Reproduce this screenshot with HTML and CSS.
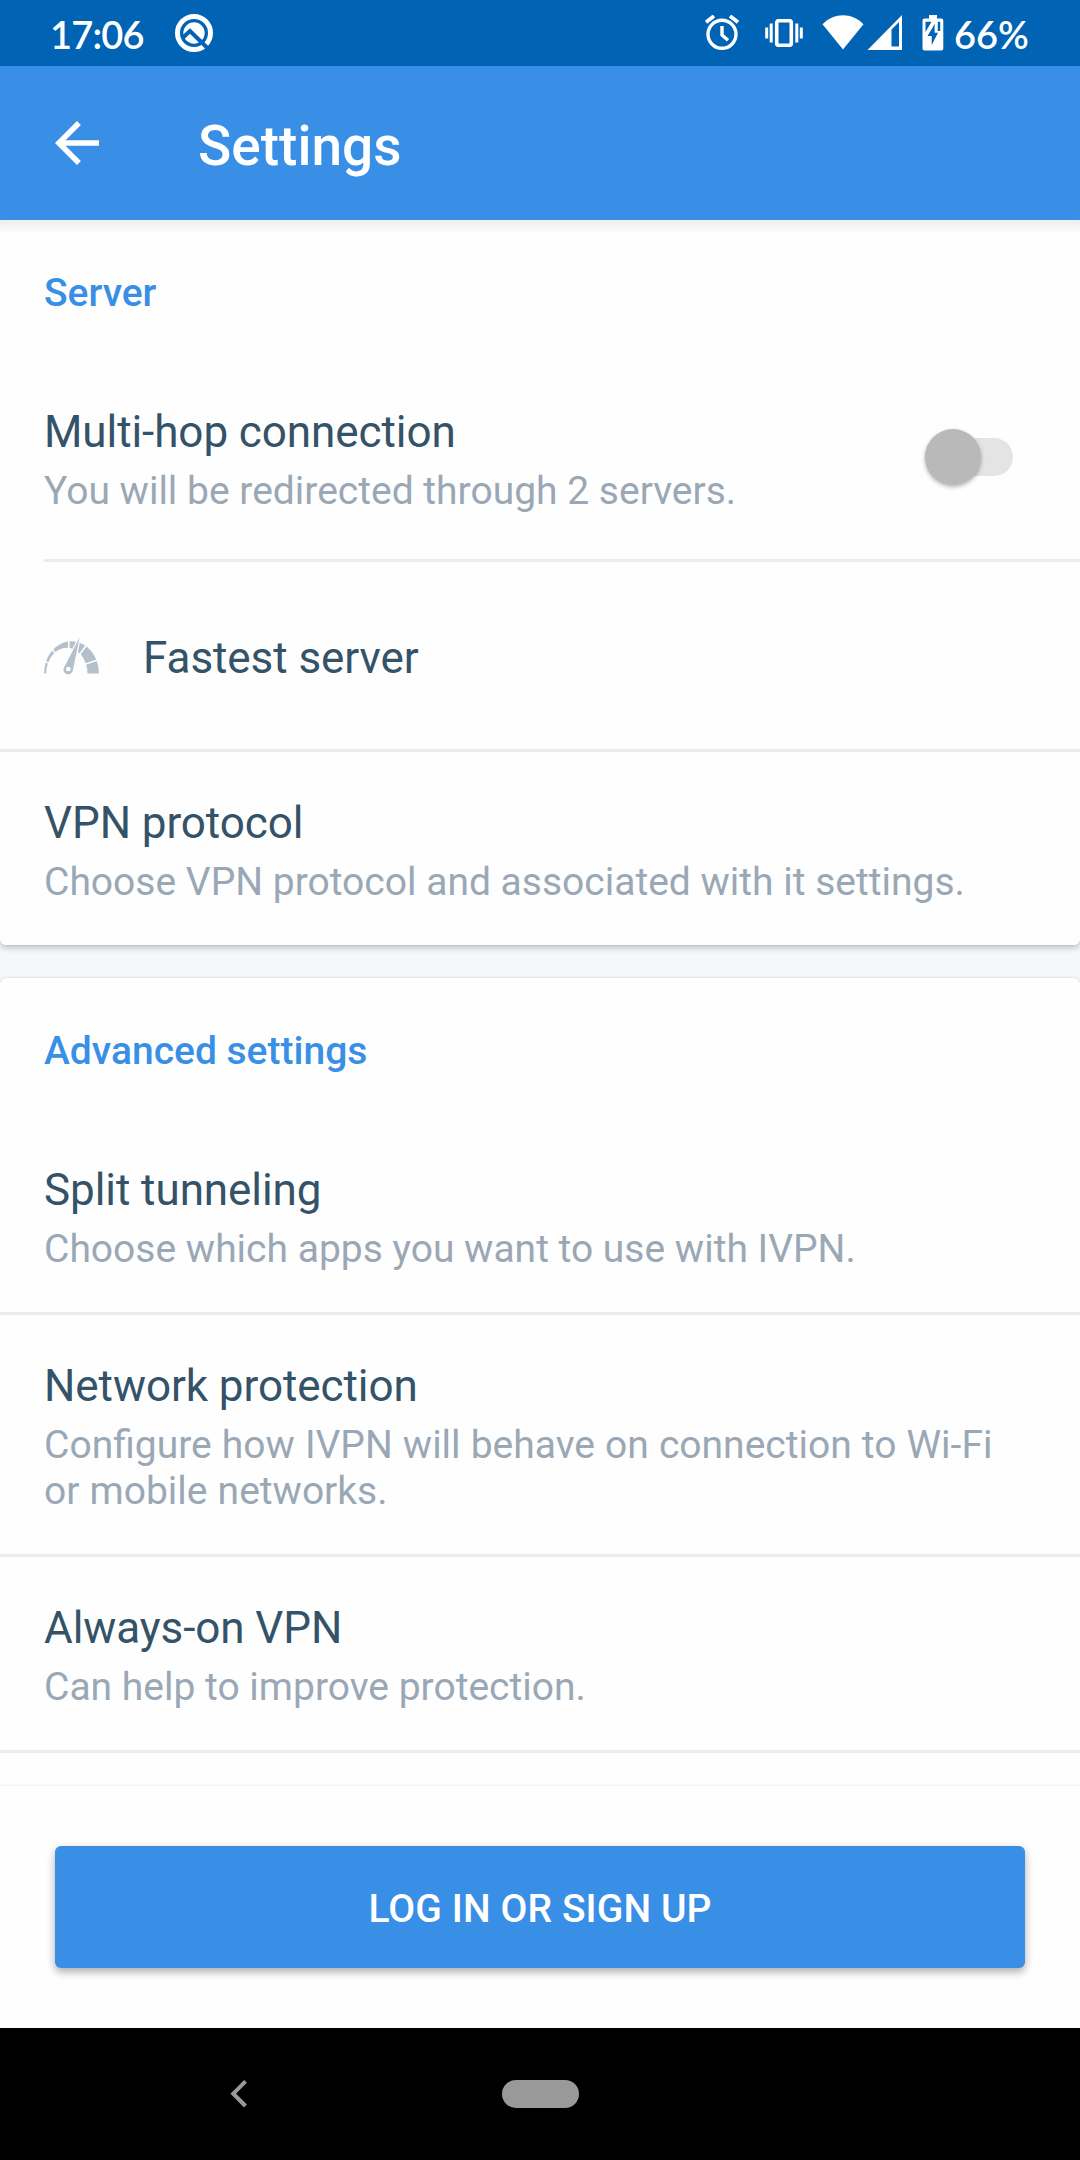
FILE: index.html
```html
<!DOCTYPE html>
<html lang="en">
<head>
<meta charset="utf-8">
<title>Settings</title>
<link rel="stylesheet" href="styles.css">
</head>
<body>
<div class="screen">
  <div class="status">
    <span class="clock">17:06</span>
    <svg class="ic-q" width="40" height="40" viewBox="0 0 40 40">
      <circle cx="20" cy="20" r="16.5" fill="none" stroke="#fff" stroke-width="5"/>
      <circle cx="20" cy="20" r="10.7" fill="#fff"/>
      <path d="M8 25.5L16 18L36 37.5" fill="none" stroke="#0063b4" stroke-width="4"/>
    </svg>
    <span class="spacer"></span>
    <svg class="ic-alarm" width="36" height="36" viewBox="0 0 36 36">
      <g fill="none" stroke="#fff" stroke-width="3.4">
        <circle cx="18" cy="19.3" r="14"/>
        <path d="M18 11V20L24 25.3"/>
        <path d="M2 7.2L10 1M34 7.2L26 1" stroke-width="3.8"/>
      </g>
    </svg>
    <svg class="ic-vibrate" width="40" height="28" viewBox="0 0 40 28">
      <rect x="12.7" y="1.7" width="14.6" height="24.6" rx="2" fill="none" stroke="#fff" stroke-width="3.6"/>
      <path d="M2.7 8.5V19.5M7.2 4.5V23.5M32.8 4.5V23.5M37.3 8.5V19.5" stroke="#fff" stroke-width="3"/>
    </svg>
    <svg class="ic-wifi" width="42" height="35" viewBox="0 0 42 35">
      <path d="M0.5 9.3C12 -2.7 30 -2.7 41.5 9.3L21 34.5Z" fill="#fff"/>
    </svg>
    <svg class="ic-signal" width="36" height="35" viewBox="0 0 36 35">
      <path fill-rule="evenodd" d="M0.5 35L35 0V35ZM24.5 14.5V31.5H32V7Z" fill="#fff"/>
    </svg>
    <svg class="ic-battery" width="22" height="36" viewBox="0 0 22 36">
      <path d="M7 0H15V3.5H19.5Q21.3 3.5 21.3 5.5V33.5Q21.3 35.5 19.3 35.5H2.5Q0.5 35.5 0.5 33.5V5.5Q0.5 3.5 2.5 3.5H7Z" fill="#fff"/>
      <path d="M3.5 6.8H9.5L3.5 17ZM15.8 6.8H18.2V16H15.8Z" fill="#0063b4"/>
      <path d="M11 12L5.5 21H9.7V30L16 17.8H12.6V8.5Z" fill="#0063b4"/>
    </svg>
    <span class="percent">66%</span>
  </div>

  <header class="appbar">
    <svg width="66" height="66" viewBox="0 0 24 24"><path fill="#fff" d="M20 11H7.83l5.59-5.59L12 4l-8 8 8 8 1.41-1.41L7.83 13H20v-2z"/></svg>
    <h1>Settings</h1>
  </header>

  <main class="content">
    <section class="card">
      <h2>Server</h2>
      <div class="row row-switch">
        <div class="text">
          <div class="title">Multi-hop connection</div>
          <div class="desc">You will be redirected through 2 servers.</div>
        </div>
        <div class="switch"><span class="thumb"></span></div>
      </div>
      <div class="divider inset"></div>
      <div class="row row-server">
        <svg width="55" height="38" viewBox="0 0 55 38">
          <path d="M0 36.5A27.5 32.3 0 0 1 55 36.5H43.5A20.4 25.4 0 0 0 2.2 36.5Z" fill="#b4c1cd"/>
          <path d="M24.3 33L-2 23.5M24.3 33L5 8M24.8 33V2M24.3 33L44 6M24.3 33L55 22.5" stroke="#fff" stroke-width="1.5"/>
          <path d="M35.7 0.3L20 30.5A4.7 4.7 0 1 0 28.8 33.5Z" fill="#b4c1cd" stroke="#fff" stroke-width="2.4"/>
          <path d="M35.7 0.3L20 30.5A4.7 4.7 0 1 0 28.8 33.5Z" fill="#b4c1cd"/>
          <circle cx="24.3" cy="32" r="2.3" fill="#fff"/>
        </svg>
        <div class="title">Fastest server</div>
      </div>
      <div class="divider"></div>
      <div class="row">
        <div class="title">VPN protocol</div>
        <div class="desc">Choose VPN protocol and associated with it settings.</div>
      </div>
    </section>

    <section class="card">
      <h2>Advanced settings</h2>
      <div class="row">
        <div class="title">Split tunneling</div>
        <div class="desc">Choose which apps you want to use with IVPN.</div>
      </div>
      <div class="divider"></div>
      <div class="row">
        <div class="title">Network protection</div>
        <div class="desc wrap">Configure how IVPN will behave on connection to Wi-Fi or mobile networks.</div>
      </div>
      <div class="divider"></div>
      <div class="row">
        <div class="title">Always-on VPN</div>
        <div class="desc">Can help to improve protection.</div>
      </div>
      <div class="divider"></div>
      <div class="row"></div>
    </section>
  </main>

  <footer class="login">
    <button class="button" type="button">LOG IN OR SIGN UP</button>
  </footer>

  <nav class="navbar">
    <svg width="20" height="30" viewBox="0 0 20 30"><path d="M15.5 2.3L3.3 14.7L15.5 27" fill="none" stroke="#999" stroke-width="4"/></svg>
    <span class="pill"></span>
    <span></span>
  </nav>
</div>
</body>
</html>
```
FILE: styles.css
```css
* { box-sizing: border-box; }
body { margin: 0; }
h1, h2 { margin: 0; font-weight: 500; }
svg { display: block; flex: none; }

.screen {
  display: flex;
  flex-direction: column;
  width: 1080px;
  height: 2160px;
  overflow: hidden;
  background: #f4f8fb;
  font-family: Roboto, "Noto Sans", sans-serif;
}

/* Status bar */
.status {
  display: flex;
  flex: none;
  align-items: flex-start;
  height: 66px;
  padding: 0 50px;
  background: #0063b4;
  color: #fff;
  font: 600 38px/66px Lato, "Open Sans", sans-serif;
}
.clock { width: 124px; padding-top: 2px; line-height: 64px; letter-spacing: -.8px; white-space: nowrap; }
.spacer { flex: 1; }
.percent { width: 76px; padding-top: 2px; line-height: 64px; white-space: nowrap; }
.ic-q { margin-top: 13px; }
.ic-alarm { margin: 15px 24px 0 0; }
.ic-vibrate { margin: 19px 18px 0 0; }
.ic-wifi { margin: 15px 3px 0 0; }
.ic-signal { margin: 15px 19px 0 0; }
.ic-battery { margin: 15px 10px 0 0; }

/* App bar */
.appbar {
  display: flex;
  flex: none;
  align-items: center;
  gap: 88px;
  height: 154px;
  padding: 0 44px;
  background: #398fe6;
  color: #fff;
}
.appbar h1 { padding-top: 5px; font-size: 55px; line-height: 64px; }

/* Settings list */
.content {
  display: flex;
  flex: none;
  flex-direction: column;
  gap: 33px;
  height: 1566px;
  overflow: hidden;
}
.card {
  flex: none;
  border-radius: 6px;
  background: #fefefe;
  box-shadow: 0 3px 6px rgba(0, 0, 0, .22), 0 0 2px rgba(0, 0, 0, .12);
}
.card:first-child { background: linear-gradient(#ededed, #fefefe 14px); }
.card h2 {
  height: 141px;
  padding: 50px 44px 0;
  color: #398fe6;
  font-size: 39px;
  line-height: 46px;
}
.row { min-height: 193px; padding: 45px 44px 40px; }
.title { color: #345268; font-size: 44px; line-height: 52px; letter-spacing: -.07px; }
.desc { margin-top: 10px; color: #9aa8b6; font-size: 39px; line-height: 46px; }
.wrap { padding-right: 22px; word-spacing: .4px; }
.row-switch { display: flex; justify-content: space-between; height: 198px; padding-right: 67px; }
.row-server { display: flex; align-items: flex-start; gap: 44px; height: 187px; min-height: 0; padding: 70px 44px 0; }
.row-server svg { margin-top: 5px; }
.divider { height: 3px; background: #e8edf0; }
.inset { margin-left: 44px; }

.switch {
  display: flex;
  align-items: center;
  width: 83px;
  height: 38px;
  margin-top: 32px;
  border-radius: 19px;
  background: #e4e4e4;
}
.thumb {
  width: 56px;
  height: 56px;
  margin-left: -5px;
  border-radius: 50%;
  background: #b9b9b9;
  box-shadow: 0 2px 4px rgba(0, 0, 0, .3);
}

/* Login panel */
.login {
  flex: none;
  height: 242px;
  padding: 60px 55px;
  background: #fefefe;
  box-shadow: 0 0 3px rgba(0, 0, 0, .12);
}
.button {
  display: block;
  width: 970px;
  height: 122px;
  padding: 4px 0 0;
  border: 0;
  border-radius: 6px;
  background: #398fe6;
  box-shadow: 0 4px 8px rgba(0, 0, 0, .32);
  color: #fff;
  font: 500 39px/46px Roboto, sans-serif;
  letter-spacing: .1px;
}

/* System navigation */
.navbar {
  display: grid;
  flex: 1;
  grid-template-columns: 480px 120px 480px;
  align-items: center;
  justify-items: center;
  background: #000;
}
.pill { width: 77px; height: 28px; border-radius: 14px; background: #999; }
```
